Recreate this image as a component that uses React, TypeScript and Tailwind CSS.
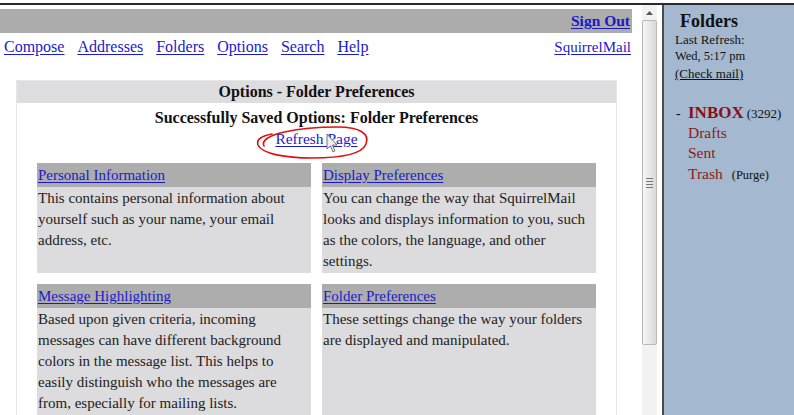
import React from "react";

const Link = ({ children, className = "" }: { children: React.ReactNode; className?: string }) => (
  <a className={`text-[#1a1acc] underline underline-offset-[2px] ${className}`}>{children}</a>
);

function Card({ title, body }: { title: string; body: string }) {
  return (
    <div className="flex flex-col">
      <div className="h-[24px] bg-[#adadad] px-[1px] flex items-center">
        <Link>{title}</Link>
      </div>
      <div className="flex-1 bg-[#dcdbdd] px-[1px] pt-[1px] pb-[1px] leading-[21px] text-[#222]">{body}</div>
    </div>
  );
}

export default function App() {
  return (
    <div className="relative w-[794px] h-[415px] overflow-hidden bg-white flex flex-col font-['Liberation_Serif','Times_New_Roman',serif] text-[15px] text-[#111]">
      <div className="h-[3px] bg-white" />
      <div className="h-[2px] bg-[#2a2a2a]" />
      <div className="flex flex-1 min-h-0">
        {/* left frame */}
        <div className="w-[640px] pt-[4px] flex flex-col">
          <div className="w-[632px] h-[24px] bg-[#acacac] flex items-center justify-end pr-[2px]">
            <Link className="font-bold text-[15.5px]">Sign Out</Link>
          </div>
          <div className="w-[632px] mt-[3px] h-[22px] flex items-center pl-[4px] pr-[1px] gap-[13px] text-[16px]">
            <Link>Compose</Link>
            <Link>Addresses</Link>
            <Link>Folders</Link>
            <Link>Options</Link>
            <Link>Search</Link>
            <Link>Help</Link>
            <Link className="ml-auto text-[15px]">SquirrelMail</Link>
          </div>
          <div className="ml-[16px] mt-[22px] w-[601px] border border-[#e6e6e6] border-b-0 flex-1">
            <div className="h-[22px] bg-[#dddcde] flex items-center justify-center font-bold text-[16px]">
              Options - Folder Preferences
            </div>
            <div className="pt-[4px] flex flex-col items-center leading-[21px]">
              <div className="font-bold text-[16px]">Successfully Saved Options: Folder Preferences</div>
              <Link className="text-[15.5px]">Refresh Page</Link>
            </div>
            <div className="mt-[14px] pl-[20px] grid grid-cols-[274px_274px] gap-x-[11px] gap-y-[11px]">
              <Card
                title="Personal Information"
                body="This contains personal information about yourself such as your name, your email address, etc."
              />
              <Card
                title="Display Preferences"
                body="You can change the way that SquirrelMail looks and displays information to you, such as the colors, the language, and other settings."
              />
              <Card
                title="Message Highlighting"
                body="Based upon given criteria, incoming messages can have different background colors in the message list. This helps to easily distinguish who the messages are from, especially for mailing lists."
              />
              <Card
                title="Folder Preferences"
                body="These settings change the way your folders are displayed and manipulated."
              />
            </div>
          </div>
        </div>
        {/* scrollbar */}
        <div className="w-[22px] bg-white flex flex-col pl-[2px] pr-[5px]">
          <div className="bg-[#f2f2f2] flex-1 flex flex-col">
            <div className="h-[15px] flex items-center justify-center">
              <svg width="7" height="4" viewBox="0 0 7 4">
                <path d="M0 4 L3.5 0 L7 4 Z" fill="#555" />
              </svg>
            </div>
            <div className="h-[325px] border border-[#b8b8b8] rounded-[2px] bg-gradient-to-r from-[#f6f6f6] via-[#e8e8e8] to-[#d8d8d8] flex items-center justify-center">
              <div className="flex flex-col gap-[2px]">
                <div className="w-[7px] h-px bg-[#777]" />
                <div className="w-[7px] h-px bg-[#777]" />
                <div className="w-[7px] h-px bg-[#777]" />
                <div className="w-[7px] h-px bg-[#777]" />
              </div>
            </div>
          </div>
        </div>
        <div className="w-[2px] bg-[#4a4a4a]" />
        {/* right panel */}
        <div className="flex-1 bg-[#a4b9cf] pl-[11px] pt-[5px] text-[#111]">
          <div className="ml-[5px] font-bold text-[18px] leading-[22px]">Folders</div>
          <div className="text-[13px] leading-[17px] -mt-[1px]">
            <div>Last Refresh:</div>
            <div className="text-[12.5px]">Wed, 5:17 pm</div>
            <div className="underline">(Check mail)</div>
          </div>
          <div className="mt-[19px] leading-[20.7px]">
            <div className="relative top-[2px] flex items-baseline">
              <span className="w-[13px] text-[14px] pl-[1px]">-</span>
              <span className="font-bold text-[17px] text-[#8a0f16]">INBOX</span>
              <span className="ml-[3px] text-[13px]">(3292)</span>
            </div>
            <div className="pl-[13px] text-[15.5px] text-[#8e1818]">Drafts</div>
            <div className="pl-[13px] text-[15.5px] text-[#8e1818]">Sent</div>
            <div className="pl-[13px] flex items-baseline">
              <span className="text-[15.5px] text-[#8e1818]">Trash</span>
              <span className="ml-[9px] text-[12.5px]">(Purge)</span>
            </div>
          </div>
        </div>
      </div>
      {/* red hand-drawn circle */}
      <svg className="absolute left-0 top-0 pointer-events-none" width="794" height="415">
        <path
          d="M264 146 C258 134 300 127 338 127 C360 127 370 134 366 144 C362 154 340 158 312 158 C286 158 262 154 258 145 C256 139 262 136 272 134"
          fill="none"
          stroke="#e01010"
          strokeWidth="1.6"
          strokeLinecap="round"
        />
        <path d="M327 134 L327 149 L330.5 146 L333 152 L335 151 L332.5 145 L337 145 Z" fill="#eee" stroke="#555" strokeWidth="0.8" />
      </svg>
    </div>
  );
}
